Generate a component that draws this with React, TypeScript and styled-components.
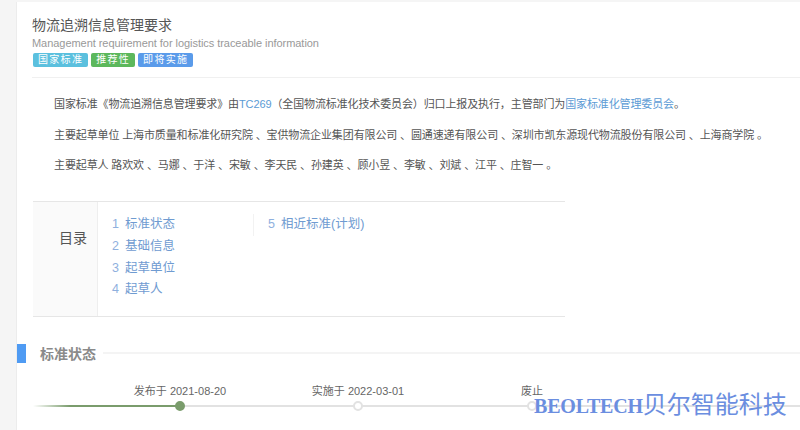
import React from "react"
import styled, { createGlobalStyle } from "styled-components"

const GlobalStyle = createGlobalStyle`
  html, body {
    margin: 0;
    padding: 0;
    background: #f5f5f5;
    overflow: hidden;
  }
  body {
    font-family: "Liberation Sans", "Noto Sans CJK SC", sans-serif;
  }
`

const Page = styled.div`
  position: relative;
  width: 800px;
  height: 430px;
  overflow: hidden;
  padding: 2px 0 0 16px;
  box-sizing: border-box;
`

const Sheet = styled.div`
  background: #fff;
  height: 428px;
  border-left: 1px solid #ececec;
  box-sizing: border-box;
`

const Header = styled.header`
  margin-left: 15px;
  padding-top: 13px;
  height: 76px;
  box-sizing: border-box;
  border-bottom: 1px solid #f0f0f0;
`

const Title = styled.h1`
  margin: 0;
  font-size: 14px;
  font-weight: normal;
  line-height: 20px;
  color: #555;
`

const Subtitle = styled.p`
  margin: 0;
  font-size: 11px;
  letter-spacing: -0.05px;
  line-height: 16px;
  color: #999;
`

const Tags = styled.div`
  display: flex;
  gap: 3px;
  margin: 2px 0 0 1px;
`

const Tag = styled.span<{ $color: string }>`
  height: 14px;
  line-height: 14px;
  padding: 0 5px;
  border-radius: 2px;
  font-size: 10px;
  letter-spacing: 1.3px;
  color: #fff;
  background: ${(p) => p.$color};
`

const Intro = styled.section`
  padding: 16px 0 0 37px;
`

const Para = styled.p`
  margin: 0 0 10.5px;
  font-size: 11px;
  letter-spacing: -0.12px;
  line-height: 20px;
  color: #555;
  white-space: nowrap;
`

const Link = styled.span`
  color: #5b9bd5;
`

const Toc = styled.section`
  display: flex;
  width: 532px;
  height: 116px;
  margin: 25.5px 0 0 16px;
  border-top: 1px solid #e6e6e6;
  border-bottom: 1px solid #e6e6e6;
  box-sizing: border-box;
`

const TocLabel = styled.div`
  width: 65px;
  padding-left: 26px;
  padding-top: 26px;
  box-sizing: border-box;
  background: #fafafa;
  border-right: 1px solid #eee;
  font-size: 14px;
  line-height: 20px;
  color: #555;
`

const TocColumns = styled.div`
  display: flex;
  padding: 12.5px 0 0 14px;
`

const TocColumn = styled.ul`
  list-style: none;
  margin: 0;
  padding: 0;
  width: 142px;
`

const TocItem = styled.li<{ $divided?: boolean }>`
  height: 21.8px;
  line-height: 20px;
  font-size: 12.5px;
  color: #6f9bd1;
  white-space: nowrap;
  ${(p) => p.$divided && "border-left: 1px solid #f2f2f2; padding-left: 14px; margin-left: -1px;"}
`

const TocNum = styled.span`
  display: inline-block;
  width: 13px;
  color: #8fb0de;
`

const SectionHead = styled.div`
  display: flex;
  align-items: center;
  height: 19px;
  margin-top: 27px;
`

const SectionMark = styled.span`
  width: 9px;
  height: 19px;
  background: #4f9bf3;
`

const SectionTitle = styled.h2`
  margin: 0 7px 0 14px;
  font-size: 14px;
  font-weight: bold;
  color: #8a8a8a;
  white-space: nowrap;
`

const SectionRule = styled.span`
  flex: 1;
  height: 2px;
  background: #f4f4f4;
`

const Timeline = styled.div`
  position: relative;
  display: flex;
  width: 767px;
  margin: 20px 0 0 16px;
`

const Track = styled.span`
  position: absolute;
  left: 0;
  right: 0;
  top: 22px;
  height: 2px;
  background: #e2e2e2;
`

const TrackDone = styled.span`
  position: absolute;
  left: 0;
  top: 22px;
  width: 148px;
  height: 2px;
  background: linear-gradient(to right, #ffffff, #7a9c6c 25%);
`

const Step = styled.div<{ $width: number }>`
  position: relative;
  flex: none;
  width: ${(p) => p.$width}px;
  display: flex;
  flex-direction: column;
  align-items: flex-end;
`

const StepLabel = styled.span`
  height: 17px;
  margin-right: -50px;
  width: 100px;
  text-align: center;
  font-size: 11px;
  line-height: 17px;
  color: #666;
  white-space: nowrap;
`

const Dot = styled.span<{ $done?: boolean }>`
  width: 10px;
  height: 10px;
  margin: 1px -5px 0 0;
  border-radius: 50%;
  box-sizing: border-box;
  background: ${(p) => (p.$done ? "#7a9c6c" : "#fff")};
  border: 2px solid ${(p) => (p.$done ? "#7a9c6c" : "#e2e2e2")};
`

const Watermark = styled.div`
  position: absolute;
  left: 534px;
  top: 390px;
  font-family: "Liberation Serif", "Noto Sans CJK SC", serif;
  font-size: 24px;
  line-height: 30px;
  color: #6b8ee0;
  white-space: nowrap;
`

const WatermarkLatin = styled.span`
  font-size: 20px;
  letter-spacing: -0.2px;
  font-weight: bold;
`

const App = () => (
  <Page>
    <GlobalStyle />
    <Sheet>
      <Header>
        <Title>物流追溯信息管理要求</Title>
        <Subtitle>Management requirement for logistics traceable information</Subtitle>
        <Tags>
          <Tag $color="#5bc0de">国家标准</Tag>
          <Tag $color="#5cb85c">推荐性</Tag>
          <Tag $color="#5a9bea">即将实施</Tag>
        </Tags>
      </Header>
      <Intro>
        <Para>
          国家标准《物流追溯信息管理要求》由<Link>TC269</Link>（全国物流标准化技术委员会）归口上报及执行，主管部门为<Link>国家标准化管理委员会</Link>。
        </Para>
        <Para>主要起草单位 上海市质量和标准化研究院 、宝供物流企业集团有限公司 、圆通速递有限公司 、深圳市凯东源现代物流股份有限公司 、上海商学院 。</Para>
        <Para>主要起草人 路欢欢 、马娜 、于洋 、宋敏 、李天民 、孙建英 、顾小昱 、李敏 、刘斌 、江平 、庄智一 。</Para>
      </Intro>
      <Toc>
        <TocLabel>目录</TocLabel>
        <TocColumns>
          <TocColumn>
            <TocItem><TocNum>1</TocNum>标准状态</TocItem>
            <TocItem><TocNum>2</TocNum>基础信息</TocItem>
            <TocItem><TocNum>3</TocNum>起草单位</TocItem>
            <TocItem><TocNum>4</TocNum>起草人</TocItem>
          </TocColumn>
          <TocColumn>
            <TocItem $divided><TocNum>5</TocNum>相近标准(计划)</TocItem>
          </TocColumn>
        </TocColumns>
      </Toc>
      <SectionHead>
        <SectionMark />
        <SectionTitle>标准状态</SectionTitle>
        <SectionRule />
      </SectionHead>
      <Timeline>
        <Track />
        <TrackDone />
        <Step $width={147}>
          <StepLabel>发布于 2021-08-20</StepLabel>
          <Dot $done />
        </Step>
        <Step $width={178}>
          <StepLabel>实施于 2022-03-01</StepLabel>
          <Dot />
        </Step>
        <Step $width={174}>
          <StepLabel>废止</StepLabel>
          <Dot />
        </Step>
      </Timeline>
    </Sheet>
    <Watermark>
      <WatermarkLatin>BEOLTECH</WatermarkLatin>贝尔智能科技
    </Watermark>
  </Page>
)

export default App
